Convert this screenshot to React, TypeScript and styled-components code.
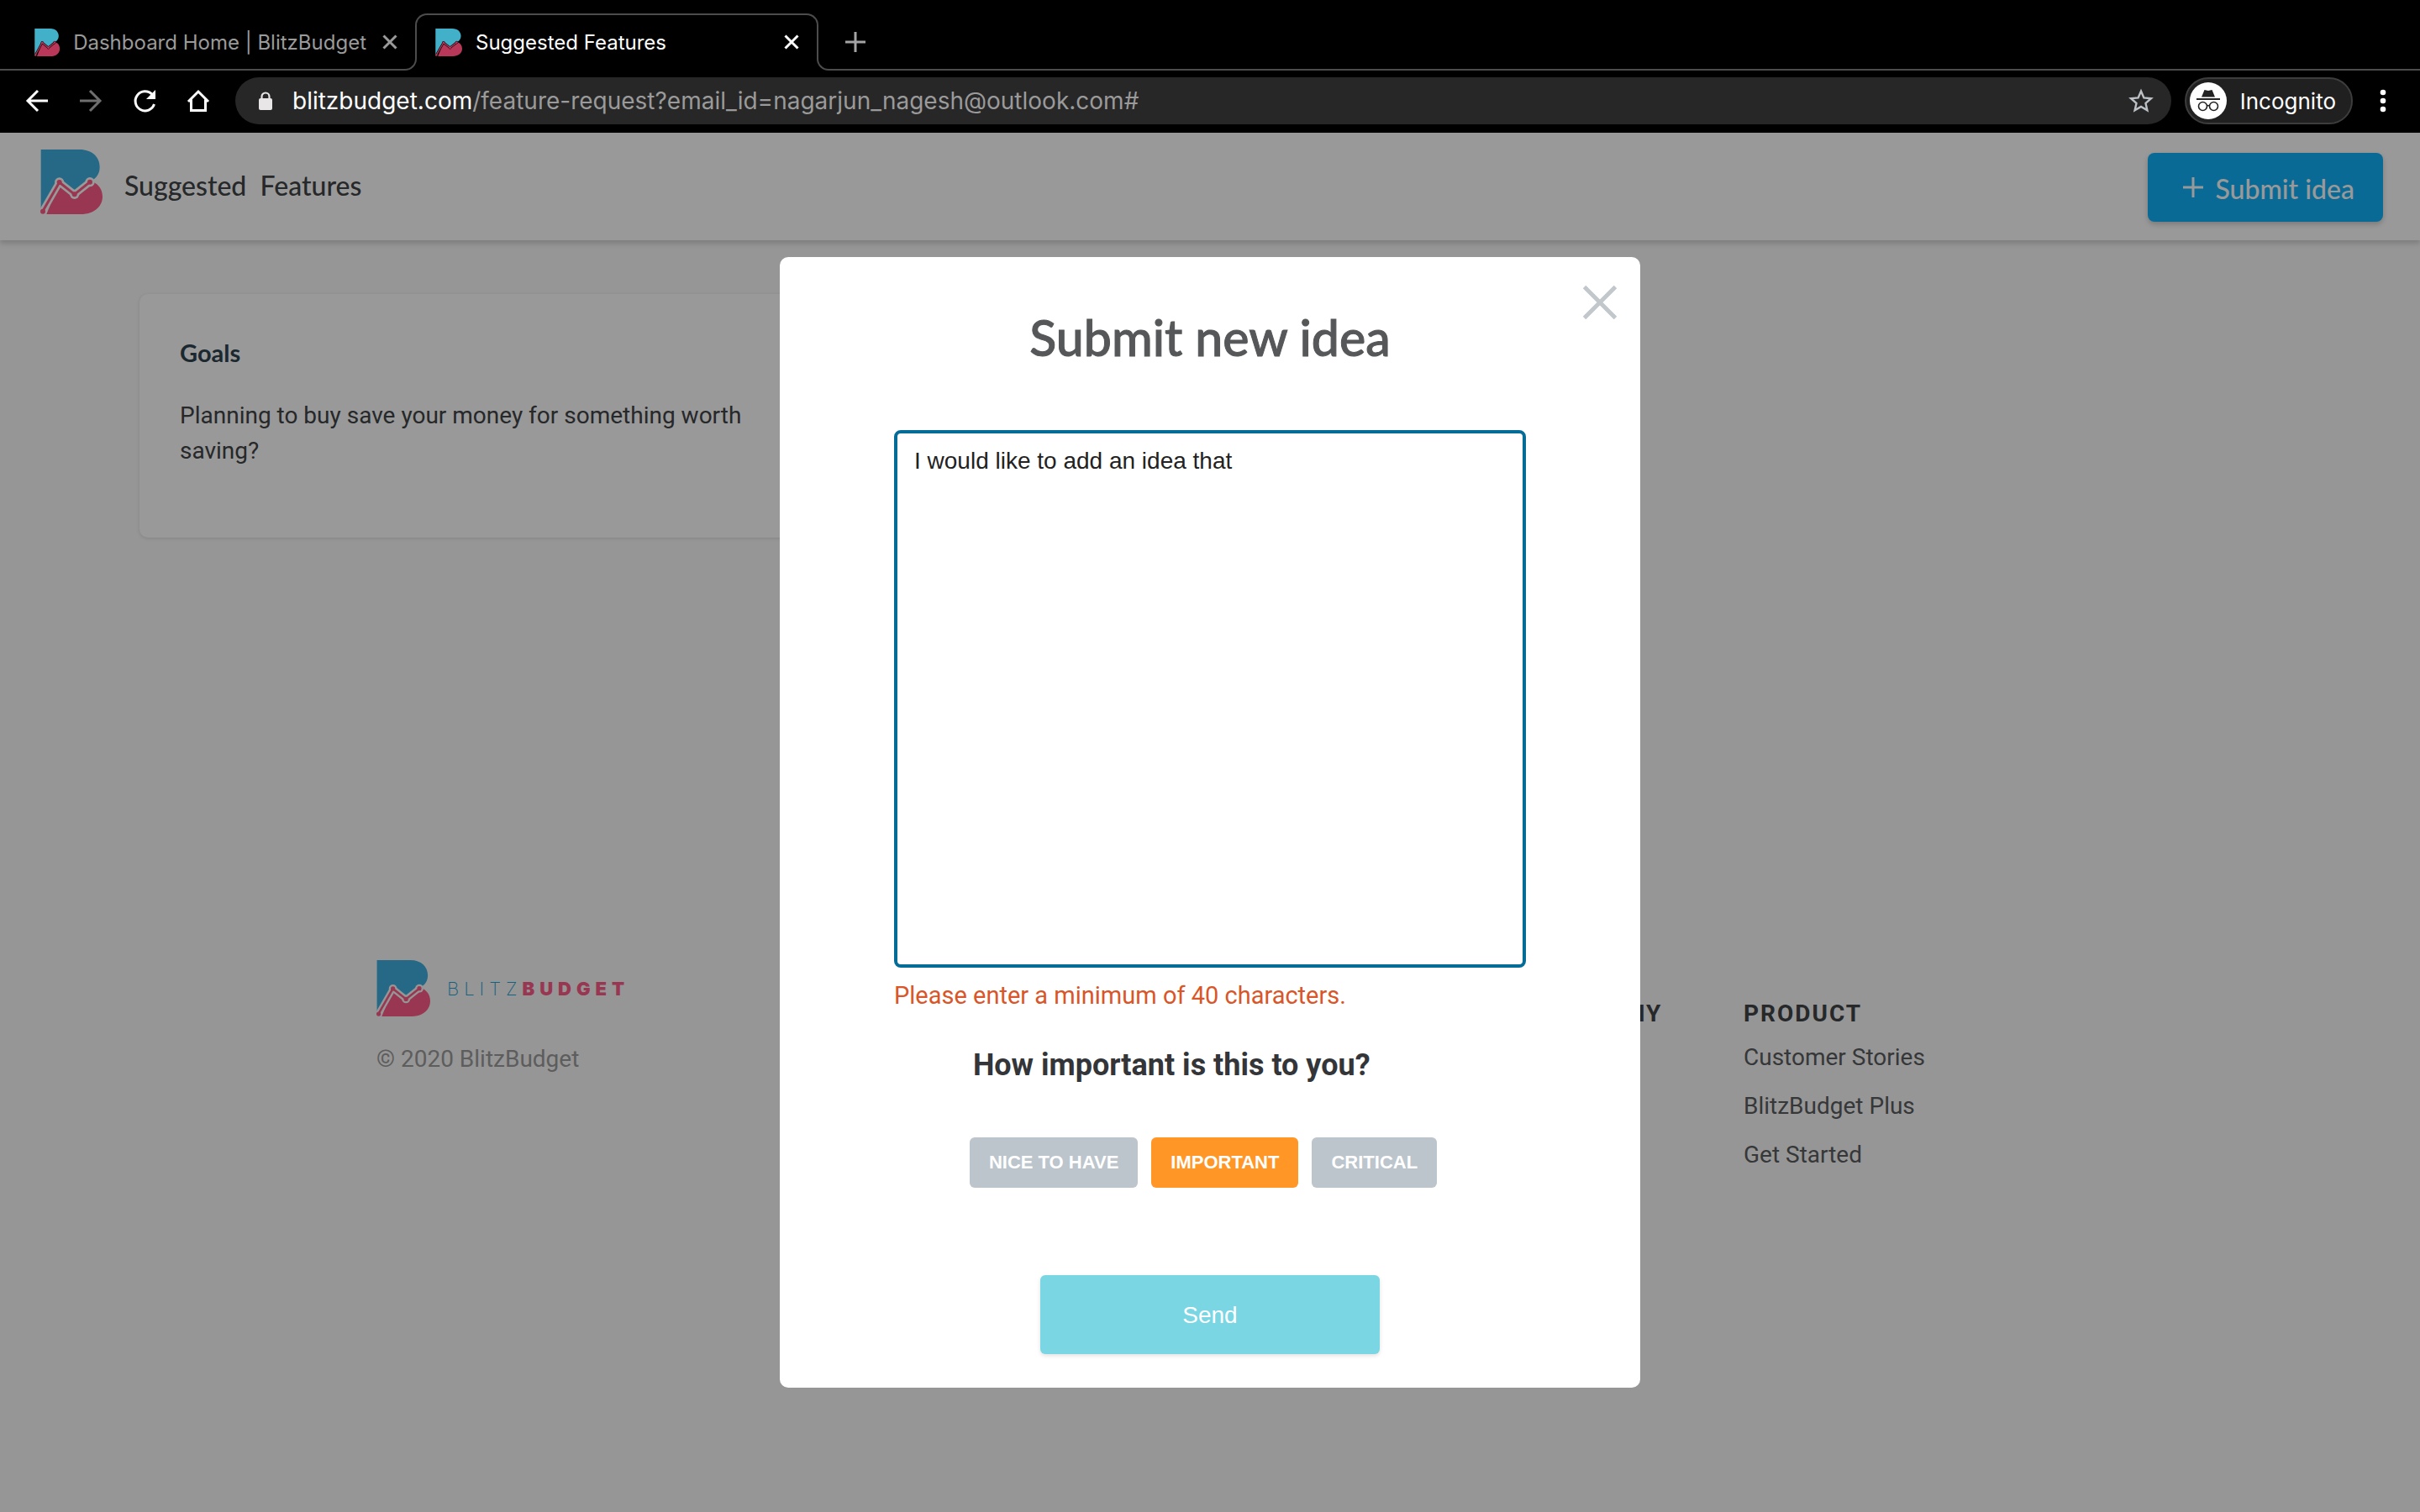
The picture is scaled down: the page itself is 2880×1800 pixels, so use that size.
import React, { useState } from "react";
import styled, { createGlobalStyle } from "styled-components";

const ui = `Roboto, "Liberation Sans", sans-serif`;
const chrome = `Inter, Roboto, sans-serif`;
const arial = `"Liberation Sans", Arial, sans-serif`;
const display = `Lato, "Open Sans", sans-serif`;

const GlobalStyle = createGlobalStyle`
  *, *::before, *::after { box-sizing: border-box; }
  html, body, #root { height: 100%; }
  body { margin: 0; background: #000; font-family: ${ui}; font-size: 28px; }
  button { border: 0; padding: 0; background: none; font: inherit; color: inherit; cursor: pointer; }
  h1, h2, h3, p, ul { margin: 0; padding: 0; }
  a { color: inherit; text-decoration: none; }
`;

const Window = styled.div`
  min-height: 100%;
  display: flex;
  flex-direction: column;
`;

/* ---------- browser chrome ---------- */

const line = "#4c4c4c";

const TabStrip = styled.div`
  display: flex;
  align-items: flex-end;
  height: 84px;
  background: #000;
  font-family: ${chrome};
`;

const Tab = styled.div<{ $active?: boolean }>`
  position: relative;
  display: flex;
  align-items: center;
  gap: 16px;
  height: 68px;
  width: ${(p) => (p.$active ? 480 : 494)}px;
  padding: 0 ${(p) => (p.$active ? 20 : 18)}px 0 ${(p) => (p.$active ? 24 : 41)}px;
  color: ${(p) => (p.$active ? "#fff" : "#9a9a9a")};
  font-size: 24px;

  &::after {
    content: "";
    position: absolute;
    pointer-events: none;
    ${(p) =>
      p.$active
        ? `inset: 0 0 14px 0; border: 2px solid ${line}; border-bottom: 0; border-radius: 14px 14px 0 0;`
        : `left: 0; right: 12px; bottom: 0; height: 2px; background: ${line};`}
  }
`;

const TabFoot = styled.span<{ $side: "left" | "right" }>`
  position: absolute;
  bottom: 0;
  ${(p) => p.$side}: -12px;
  width: 14px;
  height: 14px;
  border-bottom: 2px solid ${line};
  ${(p) =>
    p.$side === "left"
      ? `border-right: 2px solid ${line}; border-bottom-right-radius: 14px;`
      : `border-left: 2px solid ${line}; border-bottom-left-radius: 14px;`}
`;

const TabTitle = styled.span`
  flex: 1;
  white-space: nowrap;
`;

const IconButton = styled.button<{ $size: number }>`
  flex: none;
  display: flex;
  align-items: center;
  justify-content: center;
  width: ${(p) => p.$size}px;
  height: ${(p) => p.$size}px;
`;

const StripRest = styled.div`
  position: relative;
  flex: 1;
  display: flex;
  align-items: center;
  height: 68px;
  padding-left: 28px;
  color: #a4a4a6;

  &::after {
    content: "";
    position: absolute;
    left: 12px;
    right: 0;
    bottom: 0;
    height: 2px;
    background: ${line};
  }
`;

const Toolbar = styled.div`
  display: flex;
  align-items: center;
  height: 74px;
  padding: 0 28px 2px;
  background: #000;
  color: #fff;
  font-family: ${chrome};
`;

const NavButtons = styled.div`
  display: flex;
  gap: 32px;
  margin-right: 28px;
`;

const AddressBar = styled.div`
  flex: 1;
  display: flex;
  align-items: center;
  height: 56px;
  padding: 0 20px 0 24px;
  border-radius: 28px;
  background: #272727;
  color: #9a9a9a;
`;

const Address = styled.span`
  flex: 1;
  margin-left: 20px;
  white-space: nowrap;

  b {
    font-weight: 400;
    color: #fff;
  }
`;

const Incognito = styled.button`
  display: flex;
  align-items: center;
  gap: 16px;
  height: 56px;
  margin: 0 20px 0 16px;
  padding: 0 18px 0 4px;
  border: 2px solid #3d3d3d;
  border-radius: 28px;
  background: #202020;
  font-size: 26px;
`;

/* ---------- page ---------- */

const Page = styled.div`
  position: relative;
  flex: 1;
  display: flex;
  flex-direction: column;
  background: #fafafa;
  color: #404346;
`;

const Header = styled.header`
  display: flex;
  align-items: center;
  justify-content: space-between;
  height: 128px;
  padding: 2px 44px 0 48px;
  background: #fff;
  box-shadow: 0 4px 6px rgba(0, 0, 0, 0.16);
`;

const HeaderBrand = styled.a`
  display: flex;
  align-items: center;
  gap: 26px;
  margin-bottom: 14px;
`;

const HeaderTitle = styled.h1`
  font: 500 32px/40px ${display};
  white-space: pre;
  padding-top: 10px;
`;

const SubmitIdea = styled.button`
  display: flex;
  align-items: center;
  gap: 14px;
  height: 82px;
  padding: 0 34px 0 42px;
  border-radius: 8px;
  background: #11b1fa;
  box-shadow: 0 3px 6px rgba(0, 0, 0, 0.2);
  color: #fff;
  font: 500 32px/40px ${display};

  span {
    padding-top: 4px;
  }
`;

const Main = styled.main`
  display: grid;
  grid-template-columns: repeat(3, 1fr);
  gap: 40px;
  padding: 64px 166px 0;
`;

const Card = styled.article`
  height: 290px;
  padding: 48px;
  border-radius: 10px;
  background: #fff;
  box-shadow: 0 1px 4px rgba(0, 0, 0, 0.12);
  line-height: 42px;
`;

const CardTitle = styled.h2`
  margin-bottom: 32px;
  color: #2f4450;
  font: 700 29px/44px ${display};
`;

const Footer = styled.footer`
  display: flex;
  justify-content: space-between;
  width: 100%;
  max-width: 1984px;
  margin: 503px auto 0;
`;

const FooterBrand = styled.div`
  display: flex;
  flex-direction: column;
  gap: 34px;
  color: #9c9c9c;
`;

const Wordmark = styled.a`
  display: flex;
  align-items: center;
  gap: 20px;
  color: #ff5a88;
  font: 900 22px/24px Inter, sans-serif;
  letter-spacing: 6px;

  i {
    color: #1fa3d6;
    font-style: normal;
    font-weight: 200;
  }
`;

const Copyright = styled.p`
  line-height: 34px;
`;

const FooterNav = styled.nav`
  display: grid;
  grid-template-columns: 244px 357px;
  padding-top: 44px;
`;

const NavTitle = styled.h3`
  margin-bottom: 3px;
  font-size: 28px;
  font-weight: 700;
  line-height: 40px;
  letter-spacing: 2px;
`;

const NavList = styled.ul`
  list-style: none;
  color: #5a5d60;
  line-height: 58px;
`;

/* ---------- dialog ---------- */

const Backdrop = styled.div`
  position: absolute;
  inset: 0;
  display: flex;
  align-items: center;
  justify-content: center;
  background: rgba(0, 0, 0, 0.4);
`;

const Dialog = styled.form`
  position: relative;
  display: flex;
  flex-direction: column;
  width: 1024px;
  padding: 58px 136px 40px;
  border-radius: 10px;
  background: #fff;
`;

const CloseDialog = styled(IconButton)`
  position: absolute;
  top: 30px;
  right: 24px;
  color: #c2c7cc;
`;

const DialogTitle = styled.h2`
  margin-bottom: 72px;
  color: #555758;
  font: 500 59px/76px ${display};
  -webkit-text-stroke: 1px #555758;
  text-align: center;
`;

const IdeaText = styled.textarea`
  display: block;
  width: 100%;
  height: 640px;
  padding: 17px 20px;
  border: 4px solid #056c98;
  border-radius: 8px;
  outline: 0;
  resize: none;
  color: #222;
  font: 28px/32px ${arial};
`;

const ErrorText = styled.p`
  margin: 12px 0 34px;
  color: #d85629;
  font-size: 29px;
  line-height: 42px;
`;

const Importance = styled.div`
  align-self: center;
  margin-bottom: 104px;
`;

const Question = styled.h3`
  margin-bottom: 58px;
  padding-left: 4px;
  color: #333538;
  font-size: 36px;
  font-weight: 700;
  line-height: 56px;
`;

const Choices = styled.div`
  display: flex;
  gap: 16px;
  padding-right: 16px;
`;

const Choice = styled.button<{ $on: boolean }>`
  height: 60px;
  padding: 0 23px;
  border-radius: 6px;
  background: ${(p) => (p.$on ? "#ff9626" : "#bcc4cc")};
  color: #fff;
  font: 700 22px/28px ${arial};
  text-transform: uppercase;
`;

const Send = styled.button`
  align-self: center;
  width: 404px;
  height: 94px;
  padding-top: 2px;
  border-radius: 6px;
  background: #7ad6e3;
  box-shadow: 0 2px 5px rgba(0, 0, 0, 0.12);
  color: #fff;
  font: 28px/32px ${arial};
`;

/* ---------- drawings ---------- */

type LogoProps = { width: number; height: number; gap: string; blue?: string; pink?: string; halo?: number };

const Logo = ({ width, height, gap, blue = "#3fb0e2", pink = "#ff5a88", halo = 25 }: LogoProps) => (
  <svg width={width} height={height} viewBox="0 0 222 231" preserveAspectRatio="none" aria-hidden="true">
    <path d="M2 0H140C186 0 212 28 212 62C212 84 202 100 184 110L122 160L68 117L2 222Z" fill={blue} />
    <path d="M22 231L68 117L122 160L190 116C210 126 222 145 222 168C222 206 188 231 146 231Z" fill={pink} />
    <path d="M8 221L68 117L122 160L177 116" fill="none" stroke={gap} strokeWidth={halo} strokeLinejoin="round" />
    <circle cx="68" cy="117" r={halo * 0.68} fill={gap} />
    <circle cx="122" cy="160" r={halo * 0.68} fill={gap} />
    <circle cx="177" cy="116" r={halo * 0.68} fill={gap} />
    <path d="M8 221L68 117L122 160L177 116" fill="none" stroke={pink} strokeWidth="9" />
    <circle cx="9" cy="221" r="9" fill={pink} />
    <circle cx="68" cy="117" r="9" fill={pink} />
    <circle cx="122" cy="160" r="9" fill={pink} />
    <circle cx="177" cy="116" r="9" fill={pink} />
  </svg>
);

const Favicon = () => <Logo width={32} height={33} gap="#000" blue="#42b0c9" pink="#b93759" halo={18} />;

const Cross = ({ size, weight }: { size: number; weight: number }) => (
  <svg width={size} height={size} viewBox={`0 0 ${size} ${size}`} stroke="currentColor" strokeWidth={weight}>
    <path d={`M1.5 1.5L${size - 1.5} ${size - 1.5}M${size - 1.5} 1.5L1.5 ${size - 1.5}`} />
  </svg>
);

const Plus = ({ weight }: { weight: number }) => (
  <svg width="24" height="24" viewBox="0 0 24 24" stroke="currentColor" strokeWidth={weight}>
    <path d="M12 0V24M0 12H24" />
  </svg>
);

const Stroke = ({ children, dim }: { children: React.ReactNode; dim?: boolean }) => (
  <svg width="32" height="32" viewBox="0 0 32 32" fill="none" stroke={dim ? "#6f6f6f" : "#fff"} strokeWidth="3">
    {children}
  </svg>
);

const IncognitoFace = () => (
  <svg width="44" height="44" viewBox="0 0 44 44" fill="none">
    <circle cx="22" cy="22" r="22" fill="#fff" />
    <path d="M14 17.500L17.500 9L22 10L26.500 9L30 17.500Z" fill="#222" />
    <path d="M8 20H36" stroke="#222" strokeWidth="2" />
    <circle cx="15.500" cy="28.500" r="5" stroke="#222" strokeWidth="1.600" />
    <circle cx="28.500" cy="28.500" r="5" stroke="#222" strokeWidth="1.600" />
    <path d="M20.500 28Q22 27 23.500 28" stroke="#222" strokeWidth="1.600" />
  </svg>
);

const levels = ["Nice to have", "Important", "Critical"];

export default function App() {
  const [level, setLevel] = useState("Important");
  const [idea, setIdea] = useState("I would like to add an idea that");

  return (
    <Window>
      <GlobalStyle />
      <TabStrip>
        <Tab>
          <Favicon />
          <TabTitle>Dashboard Home | BlitzBudget</TabTitle>
          <IconButton $size={24} aria-label="Close tab"><Cross size={18} weight={3} /></IconButton>
        </Tab>
        <Tab $active>
          <TabFoot $side="left" />
          <Favicon />
          <TabTitle>Suggested Features</TabTitle>
          <IconButton $size={24} aria-label="Close tab"><Cross size={18} weight={3} /></IconButton>
          <TabFoot $side="right" />
        </Tab>
        <StripRest>
          <IconButton $size={32} aria-label="New tab"><Plus weight={3} /></IconButton>
        </StripRest>
      </TabStrip>

      <Toolbar>
        <NavButtons>
          <IconButton $size={32} aria-label="Back">
            <Stroke><path d="M29 16H5M17 4L5 16L17 28" /></Stroke>
          </IconButton>
          <IconButton $size={32} aria-label="Forward">
            <Stroke dim><path d="M3 16H27M15 4L27 16L15 28" /></Stroke>
          </IconButton>
          <IconButton $size={32} aria-label="Reload">
            <Stroke>
              <path d="M27.500 20A11.500 11.500 0 1 1 25 8.500" />
              <path d="M29 3V14H18Z" fill="#fff" stroke="none" />
            </Stroke>
          </IconButton>
          <IconButton $size={32} aria-label="Home">
            <Stroke><path d="M4 17L16 5L28 17M7.500 14.500V27.500H24.500V14.500" /></Stroke>
          </IconButton>
        </NavButtons>
        <AddressBar>
          <svg width="24" height="24" viewBox="0 0 24 24" aria-hidden="true">
            <rect x="4" y="9" width="16" height="14" rx="2" fill="#e8e6e6" />
            <path d="M7.500 10V7A4.500 4.500 0 0 1 16.500 7V10" fill="none" stroke="#e8e6e6" strokeWidth="2.200" />
          </svg>
          <Address><b>blitzbudget.com</b>/feature-request?email_id=nagarjun_nagesh@outlook.com#</Address>
          <IconButton $size={32} aria-label="Bookmark this page">
            <svg width="32" height="32" viewBox="0 0 32 32" fill="none" stroke="#bcc1c6" strokeWidth="2.400">
              <path d="M16 4.500L19.400 12.400L28 13.200L21.500 18.900L23.400 27.300L16 22.900L8.600 27.300L10.500 18.900L4 13.200L12.600 12.400Z" />
            </svg>
          </IconButton>
        </AddressBar>
        <Incognito>
          <IncognitoFace />
          Incognito
        </Incognito>
        <IconButton $size={32} aria-label="Menu">
          <svg width="8" height="28" viewBox="0 0 8 28" fill="#fff">
            <circle cx="4" cy="4" r="3.300" /><circle cx="4" cy="14" r="3.300" /><circle cx="4" cy="24" r="3.300" />
          </svg>
        </IconButton>
      </Toolbar>

      <Page>
        <Header>
          <HeaderBrand href="#">
            <Logo width={74} height={77} gap="#fff" />
            <HeaderTitle>Suggested  Features</HeaderTitle>
          </HeaderBrand>
          <SubmitIdea><Plus weight={3} /><span>Submit idea</span></SubmitIdea>
        </Header>

        <Main>
          <Card>
            <CardTitle>Goals</CardTitle>
            <p>Planning to buy save your money for something worth saving?</p>
          </Card>
        </Main>

        <Footer>
          <FooterBrand>
            <Wordmark href="#">
              <Logo width={64} height={67} gap="#fafafa" />
              <span><i>BLITZ</i>BUDGET</span>
            </Wordmark>
            <Copyright>© 2020 BlitzBudget</Copyright>
          </FooterBrand>
          <FooterNav>
            <NavTitle>COMPANY</NavTitle>
            <div>
              <NavTitle>PRODUCT</NavTitle>
              <NavList>
                <li><a href="#">Customer Stories</a></li>
                <li><a href="#">BlitzBudget Plus</a></li>
                <li><a href="#">Get Started</a></li>
              </NavList>
            </div>
          </FooterNav>
        </Footer>

        <Backdrop>
          <Dialog role="dialog" aria-labelledby="dialog-title" onSubmit={(e) => e.preventDefault()}>
            <CloseDialog $size={48} type="button" aria-label="Close"><Cross size={40} weight={5} /></CloseDialog>
            <DialogTitle id="dialog-title">Submit new idea</DialogTitle>
            <IdeaText aria-labelledby="dialog-title" value={idea} onChange={(e) => setIdea(e.target.value)} />
            <ErrorText>Please enter a minimum of 40 characters.</ErrorText>
            <Importance>
              <Question id="importance">How important is this to you?</Question>
              <Choices role="group" aria-labelledby="importance">
                {levels.map((name) => (
                  <Choice key={name} type="button" $on={name === level} onClick={() => setLevel(name)}>
                    {name}
                  </Choice>
                ))}
              </Choices>
            </Importance>
            <Send type="submit">Send</Send>
          </Dialog>
        </Backdrop>
      </Page>
    </Window>
  );
}
